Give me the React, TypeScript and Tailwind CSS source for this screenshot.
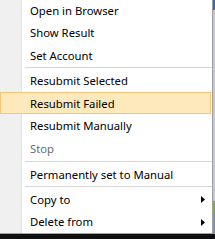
import React from 'react';

type Item =
  | { kind: 'item'; label: string; h: string; disabled?: boolean; active?: boolean; submenu?: boolean }
  | { kind: 'sep' };

const items: Item[] = [
  { kind: 'item', label: 'Open in Browser', h: 'h-[21px]' },
  { kind: 'item', label: 'Show Result', h: 'h-[23px]' },
  { kind: 'item', label: 'Set Account', h: 'h-[22px]' },
  { kind: 'sep' },
  { kind: 'item', label: 'Resubmit Selected', h: 'h-[23px]' },
  { kind: 'item', label: 'Resubmit Failed', h: 'h-[22px]', active: true },
  { kind: 'item', label: 'Resubmit Manually', h: 'h-[23px]' },
  { kind: 'item', label: 'Stop', h: 'h-[23px]', disabled: true },
  { kind: 'sep' },
  { kind: 'item', label: 'Permanently set to Manual', h: 'h-[22px]' },
  { kind: 'sep' },
  { kind: 'item', label: 'Copy to', h: 'h-[22px]', submenu: true },
  { kind: 'item', label: 'Delete from', h: 'h-[23px]', submenu: true },
];

const Arrow = () => (
  <svg width="4" height="7" viewBox="0 0 4 7" className="mr-[7px] shrink-0">
    <path d="M0 0 L4 3.5 L0 7 Z" fill="#000" />
  </svg>
);

const MenuRow: React.FC<{ item: Item }> = ({ item }) => {
  if (item.kind === 'sep') {
    return (
      <div className="flex h-[3px]">
        <div className="w-[22px] shrink-0 bg-[#f0f0f0] border-r border-[#e2e2e2]" />
        <div className="flex-1 flex items-center pl-[3px]">
          <div className="h-px w-full bg-[#d7d7d7]" />
        </div>
      </div>
    );
  }

  if (item.active) {
    return (
      <div className={`flex ${item.h} mr-px items-center bg-[#fde9bb] border border-[#f5c57a]`}>
        <span className="pl-[29px] pt-px text-black">{item.label}</span>
      </div>
    );
  }

  return (
    <div className={`flex ${item.h}`}>
      <div className="w-[22px] shrink-0 bg-[#f0f0f0] border-r border-[#e2e2e2]" />
      <div className="flex-1 flex items-center justify-between pl-[8px] pt-px">
        <span className={item.disabled ? 'text-[#6d6d6d]' : 'text-black'}>{item.label}</span>
        {item.submenu && <Arrow />}
      </div>
    </div>
  );
};

export default function App() {
  return (
    <div
      className="w-[215px] h-[239px] flex flex-col overflow-hidden text-[11.3px] leading-none"
      style={{ fontFamily: '"Noto Sans", "Open Sans", sans-serif' }}
    >
      <div className="flex h-[234px]">
        <div className="w-[213px] flex flex-col bg-white border-r border-b border-[#a0a0a0]">
          {items.map((it, i) => (
            <MenuRow key={i} item={it} />
          ))}
        </div>
        <div className="flex-1 flex flex-col">
          <div className="h-[10px] bg-[#2f6bb3]" />
          <div className="flex-1 bg-[#c4c7d8]" />
          <div className="h-px bg-[#8090a8]" />
          <div className="h-[12px] bg-[#86a64c]" />
          <div className="h-[20px] bg-[#7b93ad]" />
        </div>
      </div>
      <div className="flex-1 bg-[#101010]" />
    </div>
  );
}
